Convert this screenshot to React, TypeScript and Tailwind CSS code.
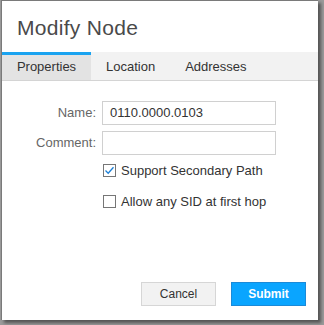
import { useState } from 'react'

const FONT = { fontFamily: '"Liberation Sans", Arial, sans-serif' }

function Check({ checked }: { checked: boolean }) {
  return (
    <span className="w-[13px] h-[13px] border border-[#767676] bg-white flex items-center justify-center shrink-0">
      {checked && (
        <svg width="11" height="11" viewBox="0 0 11 11">
          <path d="M1.5 5.5 L4.2 8.2 L9.5 2.2" fill="none" stroke="#1b7fd6" strokeWidth="1.3" />
        </svg>
      )}
    </span>
  )
}

export default function App() {
  const [tab] = useState('Properties')
  const tabs = ['Properties', 'Location', 'Addresses']

  return (
    <div className="w-[324px] h-[325px] bg-[#9a9a9a] pl-px" style={FONT}>
      <div className="w-[317px] h-[320px] bg-white border-l border-t border-[#7a7a7a] shadow-[3px_3px_3px_rgba(0,0,0,0.45)] flex flex-col">
        <div className="h-[51px] pl-[15px] pt-[15px] text-[21px] leading-[24px] text-[#4a4a4a] tracking-[0.3px]">
          Modify Node
        </div>
        <div className="flex h-[29px] bg-[#f2f2f2] border-b border-[#d4d4d4] text-[13px] text-[#333]">
          {tabs.map((t) => (
            <div
              key={t}
              className={
                t === tab
                  ? 'w-[89px] bg-[#e3e3e3] border-t-[3px] border-[#1aa3f0] flex items-center justify-center pb-px'
                  : 'px-[15px] flex items-center justify-center pt-[3px] pb-px'
              }
            >
              {t}
            </div>
          ))}
        </div>
        <div className="pt-[20px] flex flex-col gap-[6px] text-[13px]">
          <div className="flex items-center">
            <span className="w-[100px] text-right text-[#666] pr-[6px]">Name:</span>
            <div className="w-[174px] h-[24px] border border-[#d0d0d0] px-[7px] flex items-center text-[#333]">
              0110.0000.0103
            </div>
          </div>
          <div className="flex items-center">
            <span className="w-[100px] text-right text-[#666] pr-[6px]">Comment:</span>
            <div className="w-[174px] h-[24px] border border-[#d0d0d0]" />
          </div>
          <div className="pl-[101px] pt-[2px] flex flex-col gap-[16px] text-[#333]">
            <div className="h-[15px] flex items-center gap-[5px]">
              <Check checked />
              <span>Support Secondary Path</span>
            </div>
            <div className="h-[15px] flex items-center gap-[5px]">
              <Check checked={false} />
              <span>Allow any SID at first hop</span>
            </div>
          </div>
        </div>
        <div className="mt-auto pb-[14px] pr-[12px] flex justify-end gap-[15px] text-[12px]">
          <button className="w-[75px] h-[24px] bg-[#f2f2f2] border border-[#d6d6d6] text-[#333]">Cancel</button>
          <button className="w-[75px] h-[24px] bg-[#0aa5ff] border border-[#1b8ad8] text-white font-bold">Submit</button>
        </div>
      </div>
    </div>
  )
}
